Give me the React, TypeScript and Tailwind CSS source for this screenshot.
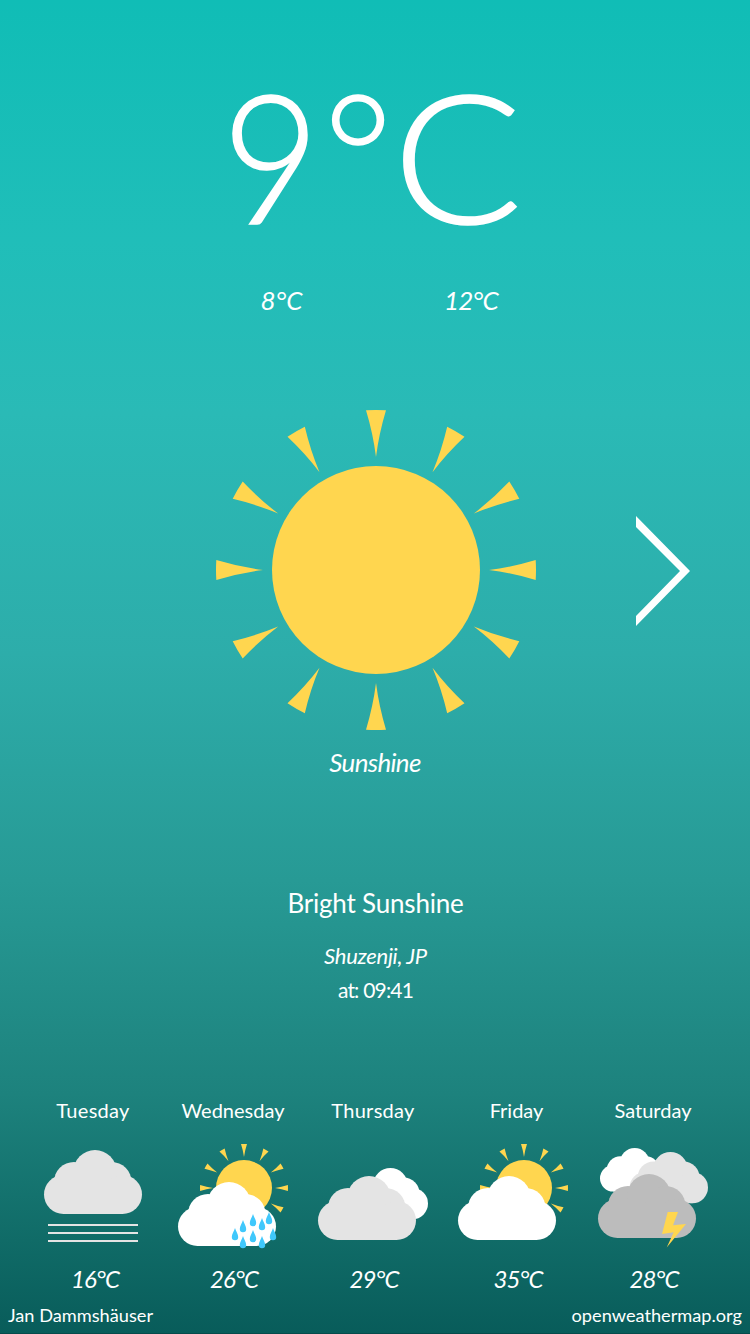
import React from "react";

const SUN = "#ffd64f";

function Rays({ cx, cy, outer, inner, half }: { cx: number; cy: number; outer: number; inner: number; half: number }) {
  const edge = Math.sqrt(outer * outer - half * half);
  const bend = inner + (outer - inner) * 0.5;
  const d = `M${cx} ${cy - inner}Q${cx - half * 0.3} ${cy - bend} ${cx - half} ${cy - edge}A${outer} ${outer} 0 0 1 ${cx + half} ${cy - edge}Q${cx + half * 0.3} ${cy - bend} ${cx} ${cy - inner}Z`;
  return (
    <>
      {Array.from({ length: 12 }, (_, i) => (
        <path key={i} d={d} fill={SUN} transform={`rotate(${i * 30} ${cx} ${cy})`} />
      ))}
    </>
  );
}

function Cloud({ x, y, scale = 1, fill }: { x: number; y: number; scale?: number; fill: string }) {
  return (
    <g transform={`translate(${x} ${y}) scale(${scale})`} fill={fill}>
      <circle cx="19.5" cy="44.5" r="19.5" />
      <circle cx="30" cy="32" r="20" />
      <circle cx="51" cy="21.5" r="21.5" />
      <circle cx="67.5" cy="32" r="20" />
      <circle cx="78.5" cy="44.5" r="19.5" />
      <rect x="19.5" y="30" width="59" height="34" />
    </g>
  );
}

function SmallSun() {
  return (
    <>
      <Rays cx={66} cy={44} outer={44} inner={31} half={3} />
      <circle cx="66" cy="44" r="28" fill={SUN} />
    </>
  );
}

const DROPS = [
  [57, 84], [65, 76], [75, 70], [84, 74], [91, 68],
  [95, 84], [65, 92], [75, 86], [84, 92],
];

function Icon({ kind }: { kind: string }) {
  return (
    <svg className="block h-[104px] w-[110px] overflow-visible" viewBox="0 0 110 104">
      {kind === "fog" && (
        <>
          <Cloud x={6} y={6} fill="#e4e4e4" />
          <path d="M10 81h90M10 89h90M10 97h90" stroke="#e4e4e4" strokeWidth="2" />
        </>
      )}
      {kind === "rain" && (
        <>
          <SmallSun />
          <Cloud x={0} y={38} fill="#fff" />
          {DROPS.map(([x, y]) => (
            <path
              key={`${x}-${y}`}
              d="M0 0C.8 3 3.2 6 3.2 9A3.2 3.3 0 0 1-3.2 9C-3.2 6-.8 3 0 0Z"
              fill="#40c8fc"
              transform={`translate(${x} ${y})`}
            />
          ))}
        </>
      )}
      {kind === "clouds" && (
        <>
          <Cloud x={31.6} y={24} scale={0.8} fill="#fff" />
          <Cloud x={0} y={32} fill="#e4e4e4" />
        </>
      )}
      {kind === "partly" && (
        <>
          <SmallSun />
          <Cloud x={0} y={32} fill="#fff" />
        </>
      )}
      {kind === "storm" && (
        <>
          <Cloud x={2} y={4} scale={0.68} fill="#fff" />
          <Cloud x={31.6} y={8} scale={0.8} fill="#e4e4e4" />
          <Cloud x={0} y={30} fill="#bcbcbc" />
          <path d="M69.7 68H80L75 81.3L88 80L68.7 103.5L75.7 88.3L64 90Z" fill={SUN} />
        </>
      )}
    </svg>
  );
}

const DAYS = [
  { day: "Tuesday", temp: "16°C", icon: "fog", dayClass: "tracking-[0.3px]", tempClass: "pl-1" },
  { day: "Wednesday", temp: "26°C", icon: "rain", dayClass: "", tempClass: "pl-0.5" },
  { day: "Thursday", temp: "29°C", icon: "clouds", dayClass: "tracking-[0.3px]", tempClass: "pl-0.5" },
  { day: "Friday", temp: "35°C", icon: "partly", dayClass: "pl-[7px]", tempClass: "pl-2.5" },
  { day: "Saturday", temp: "28°C", icon: "storm", dayClass: "", tempClass: "pl-0.5" },
];

export default function App() {
  return (
    <main className="flex h-[1334px] w-[750px] flex-col overflow-hidden bg-[linear-gradient(180deg,#10bdb6_0%,#20beb9_18%,#2abab6_31%,#2dadaa_49%,#279a95_66%,#1d827d_82%,#106b67_93%,#085c5a_100%)] pt-[94px] font-['Lato','Liberation_Sans',sans-serif] text-white">
      <h1 className="flex h-[120px] justify-center text-[179px] leading-[121px] font-light [-webkit-text-stroke:1.6px_white]">
        <span className="-translate-x-[7px] scale-x-[0.94]">9</span>
        <span className="-translate-x-[8px] -translate-y-[5px] scale-[0.94]">°</span>
        <span className="-translate-x-[6px] scale-x-[1.07]">C</span>
      </h1>

      <div className="mt-[66px] flex h-10 justify-center text-[26px] leading-[41px] italic">
        <span className="w-[188px] pl-px text-center">8°C</span>
        <span className="w-[188px] pl-1 text-center tracking-[-0.8px]">12°C</span>
      </div>

      <div className="mt-[90px] grid h-80 grid-cols-[216px_320px_1fr]">
        <svg className="col-start-2 h-80 w-80" viewBox="0 0 320 320">
          <Rays cx={160} cy={160} outer={160} inner={113} half={10} />
          <circle cx="160" cy="160" r="104" fill={SUN} />
        </svg>
        <button className="mt-[106px] ml-[100px] h-[110px] w-[54px]" aria-label="Next">
          <svg className="block h-[110px] w-[54px]" viewBox="0 0 54 110">
            <path d="M0 0L54 55L0 110V100L44 55L0 11Z" fill="#fff" />
          </svg>
        </button>
      </div>

      <p className="mt-[12px] h-10 text-center text-[26px] leading-10 tracking-[-0.7px] italic">Sunshine</p>
      <h2 className="mt-[101px] h-10 pl-px text-center text-[26px] leading-10 tracking-[-0.2px]">Bright Sunshine</h2>
      <p className="mt-[16px] h-[34px] pl-px text-center text-[22px] leading-[34px] tracking-[-0.3px] italic">Shuzenji, JP</p>
      <p className="h-[34px] pl-px text-center text-[21px] leading-[34px] tracking-[-0.8px]">at: 09:41</p>

      <section className="mt-[88px] flex gap-[30px] pl-[38px]">
        {DAYS.map((d) => (
          <div key={d.day} className="flex w-[110px] flex-col items-center">
            <span className={`h-[30px] text-[20px] leading-[30px] ${d.dayClass}`}>{d.day}</span>
            <div className="mt-[19px]">
              <Icon kind={d.icon} />
            </div>
            <span className={`mt-4 h-[30px] text-[24px] leading-[30px] tracking-[-0.9px] italic ${d.tempClass}`}>{d.temp}</span>
          </div>
        ))}
      </section>

      <footer className="mt-[6px] flex h-[30px] justify-between px-2 text-[18.2px] leading-[30px]">
        <span>Jan Dammshäuser</span>
        <span>openweathermap.org</span>
      </footer>
      <div className="mt-[3px] h-px bg-[#064b4b]" />
    </main>
  );
}
